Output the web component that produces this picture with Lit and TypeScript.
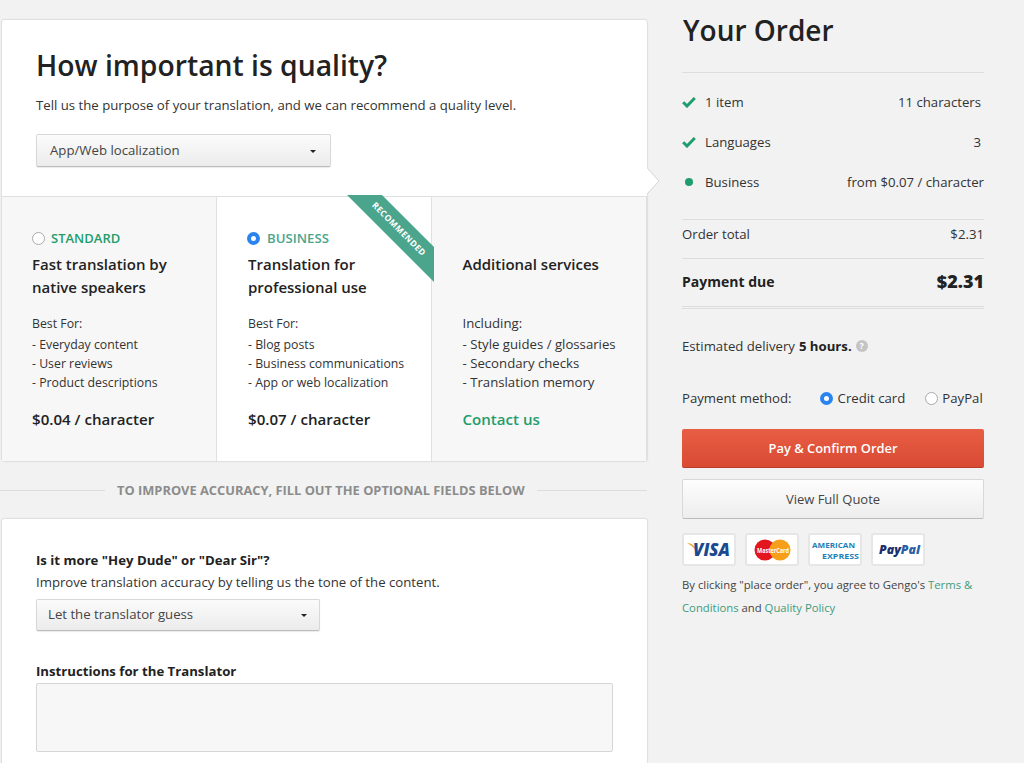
import { LitElement, html, css } from "lit";
import { customElement } from "lit/decorators.js";

const check = () => html`<svg class="ico" width="14" height="12" viewBox="0 0 14 12"><path d="M1.2 6.2 L5 10 L12.8 2" fill="none" stroke="#1f9d6c" stroke-width="3"/></svg>`;

@customElement("app-root")
export class AppRoot extends LitElement {
  static styles = css`
    :host { display: block; width: 1024px; height: 763px; overflow: hidden; background: #f2f2f2; font-family: "Open Sans", sans-serif; color: #333; font-size: 13.2px; }
    * { box-sizing: border-box; }
    .page { display: flex; height: 763px; padding-left: 2px; }
    .left { width: 645px; padding-top: 20px; flex: none; }
    .right { width: 302px; margin-left: 35px; flex: none; }
    .card { background: #fff; box-shadow: 0 0 2px rgba(0,0,0,.28); border-radius: 2px; position: relative; }
    .head { height: 176px; padding: 25px 34px 0; position: relative; }
    .arrow { position: absolute; left: 643px; top: 149px; z-index: 1; }
    h1 { margin: 0; font-size: 28.3px; line-height: 40px; font-weight: 600; color: #222; }
    .sub { margin: 10px 0 0; line-height: 20px; color: #333; }
    .select { display: flex; align-items: center; justify-content: space-between; background: linear-gradient(#fbfbfb,#ececec); border: 1px solid #d8d8d8; border-bottom-color: #bcbcbc; border-radius: 2px; color: #444; font-size: 13.2px; box-shadow: 0 1px 1px rgba(0,0,0,.08); }
    .select i { width: 0; height: 0; border: 3.5px solid transparent; border-top-color: #222; border-bottom: 0; margin-top: 3px; }
    .s1 { width: 295px; height: 33px; margin-top: 19px; padding: 0 14px 2px 13px; }
    .s2 { width: 284px; height: 32px; margin-top: 7px; padding: 0 12px 2px 11px; }
    .plans { display: flex; height: 265px; border-top: 1px solid #e0e0e0; position: relative; }
    .plan { width: 215px; padding: 32px 15px 0 30px; background: #f7f7f7; border-right: 1px solid #e0e0e0; position: relative; }
    .plan.on { background: #fff; padding-left: 31px; }
    .plan.on .tag { margin-left: -1px; gap: 7px; font-size: 13.2px; }
    .plan:last-child { border-right: 0; flex: 1; }
    .tag { display: flex; align-items: center; gap: 6px; height: 18px; font-size: 13px; font-weight: 600; color: #1f9d6c; }
    .on .tag { color: #4aa58c; }
    .radio { width: 13px; height: 13px; border-radius: 50%; border: 1px solid #aaa; background: #fff; flex: none; }
    .radio.sel { border: 4px solid #2a84f0; }
    .pt { font-size: 15px; font-weight: 600; line-height: 23px; color: #222; margin-top: 6px; height: 46px; }
    .lines { margin-top: 15px; font-size: 12.3px; line-height: 19px; color: #333; height: 77px; }
    .lines b { display: block; font-weight: 400; margin-bottom: 2px; }
    .third .lines { font-size: 13.2px; }
    .price { margin-top: 17px; font-size: 15.1px; font-weight: 600; color: #222; line-height: 22px; }
    .price.green { color: #1f9d6c; }
    .plan.third { padding-left: 30.5px; }
    .ribbon { position: absolute; left: 345px; top: -2px; z-index: 1; }
    .rib-t { position: absolute; left: 351px; top: 26px; width: 92px; text-align: center; transform: rotate(45deg); color: #fff; font-size: 8.5px; font-weight: 700; line-height: 12px; letter-spacing: .4px; z-index: 2; white-space: nowrap; }
    .divider { display: flex; align-items: center; height: 58px; width: 647px; margin-left: -2px; gap: 12px; color: #8c8c8c; font-size: 12.85px; font-weight: 700; white-space: nowrap; }
    .divider::before, .divider::after { content: ""; height: 1px; background: #dcdcdc; }
    .divider::before { flex: none; width: 105px; }
    .divider::after { flex: 1; }
    .card2 { height: 300px; padding: 31px 34px; }
    .q { font-weight: 700; line-height: 20px; color: #222; }
    .qs { line-height: 20px; margin-top: 2px; }
    .q2 { margin-top: 30px; }
    .ta { width: 577px; height: 69px; border: 1px solid #d6d6d6; background: #f7f7f7; margin-top: 2px; border-radius: 2px; }
    h2 { margin: 0; height: 73px; padding: 10px 0 0 1px; font-size: 28px; line-height: 40px; font-weight: 600; color: #222; border-bottom: 1px solid #ddd; }
    .row { display: flex; align-items: center; height: 40px; }
    .row .ic { width: 23px; display: flex; }
    .row .v { margin-left: auto; padding-right: 3px; }
    .row .v.f { padding-right: 0; }
    .dot { width: 8px; height: 8px; background: #1f9d6c; border-radius: 50%; margin-left: 3px; }
    .sum { padding-top: 9px; height: 147px; border-bottom: 1px solid #ddd; }
    .line { display: flex; justify-content: space-between; align-items: center; }
    .total { height: 39px; padding-bottom: 11px; border-bottom: 1px solid #ddd; }
    .due { height: 50px; padding-bottom: 3px; border-bottom: 3px double #ddd; font-weight: 700; font-size: 14px; color: #222; }
    .due b { font-size: 18px; }
    .est { margin-top: 27px; height: 20px; display: flex; align-items: center; gap: 4px; }
    .est b { color: #222; }
    .help { width: 12px; height: 12px; border-radius: 50%; background: #c4c4c4; color: #fff; font-size: 9px; font-weight: 700; text-align: center; line-height: 12px; margin-left: 0; }
    .pay { margin-top: 32px; display: flex; align-items: center; height: 20px; white-space: nowrap; }
    .pay .r1 { margin-left: 28px; margin-right: 5px; }
    .pay .r2 { margin-left: 20px; margin-right: 4px; }
    .btn { display: flex; align-items: center; justify-content: center; border-radius: 2px; height: 39px; }
    .red { margin-top: 21px; background: linear-gradient(#e85e45,#d94a33); color: #fff; border-bottom: 1px solid #b93d29; font-weight: 600; font-size: 12.9px; }
    .white { margin-top: 11px; height: 40px; background: linear-gradient(#fdfdfd,#ededed); border: 1px solid #d8d8d8; border-bottom-color: #bbb; color: #444; font-weight: 500; font-size: 13px; }
    .logos { display: flex; gap: 9px; margin-top: 14px; }
    .logo { width: 54px; height: 33px; background: #fff; border: 2px solid #e6e6e6; border-radius: 3px; display: block; }
    .terms { margin-top: 8px; font-size: 11.3px; line-height: 22.5px; color: #444; }
    .terms span { color: #3d9c7c; }
  `;

  render() {
    return html`<div class="page">
      <div class="left">
        <div class="card">
          <svg class="arrow" width="16" height="26" viewBox="0 0 16 26"><polygon points="0,0 3,0 14,12 3,24 0,24" fill="#fff"/><path d="M3 0 L14 12 L3 24" fill="none" stroke="#d4d4d4" stroke-width="1"/></svg>
          <div class="head">
            <h1>How important is quality?</h1>
            <p class="sub">Tell us the purpose of your translation, and we can recommend a quality level.</p>
            <div class="select s1"><span>App/Web localization</span><i></i></div>
          </div>
          <div class="plans">
            <div class="plan">
              <div class="tag"><span class="radio"></span>STANDARD</div>
              <div class="pt">Fast translation by<br />native speakers</div>
              <div class="lines"><b>Best For:</b>- Everyday content<br />- User reviews<br />- Product descriptions</div>
              <div class="price">$0.04 / character</div>
            </div>
            <div class="plan on">
              <div class="tag"><span class="radio sel"></span>BUSINESS</div>
              <div class="pt">Translation for<br />professional use</div>
              <div class="lines"><b>Best For:</b>- Blog posts<br />- Business communications<br />- App or web localization</div>
              <div class="price">$0.07 / character</div>
            </div>
            <div class="plan third">
              <div class="tag"></div>
              <div class="pt">Additional services</div>
              <div class="lines"><b>Including:</b>- Style guides / glossaries<br />- Secondary checks<br />- Translation memory</div>
              <div class="price green">Contact us</div>
            </div>
            <svg class="ribbon" width="90" height="90" viewBox="0 0 90 90"><polygon points="0,0 35,0 87,52 87,87" fill="#4aa58c"/></svg>
            <div class="rib-t">RECOMMENDED</div>
          </div>
        </div>
        <div class="divider">TO IMPROVE ACCURACY, FILL OUT THE OPTIONAL FIELDS BELOW</div>
        <div class="card card2">
          <div class="q">Is it more "Hey Dude" or "Dear Sir"?</div>
          <div class="qs">Improve translation accuracy by telling us the tone of the content.</div>
          <div class="select s2"><span>Let the translator guess</span><i></i></div>
          <div class="q q2">Instructions for the Translator</div>
          <div class="ta"></div>
        </div>
      </div>
      <div class="right">
        <h2>Your Order</h2>
        <div class="sum">
          <div class="row"><span class="ic">${check()}</span>1 item<span class="v">11 characters</span></div>
          <div class="row"><span class="ic">${check()}</span>Languages<span class="v">3</span></div>
          <div class="row"><span class="ic"><span class="dot"></span></span>Business<span class="v f">from $0.07 / character</span></div>
        </div>
        <div class="line total"><span>Order total</span><span>$2.31</span></div>
        <div class="line due"><span>Payment due</span><b>$2.31</b></div>
        <div class="est">Estimated delivery <b>5 hours.</b><span class="help">?</span></div>
        <div class="pay">Payment method:<span class="radio sel r1"></span>Credit card<span class="radio r2"></span>PayPal</div>
        <div class="btn red">Pay &amp; Confirm Order</div>
        <div class="btn white">View Full Quote</div>
        <div class="logos">
          <svg class="logo" viewBox="2 2 50 29"><path d="M5 10 C10 10 13 13 15 19 C12 15 9 12 5 10Z" fill="#f0a830"/><text x="11" y="23" font-family="Open Sans" font-weight="800" font-style="italic" font-size="18" textLength="37" lengthAdjust="spacingAndGlyphs" fill="#1a4a8f">VISA</text></svg>
          <svg class="logo" viewBox="2 2 50 29"><circle cx="20" cy="17" r="10.5" fill="#e3161f"/><circle cx="35" cy="17" r="10.5" fill="#f79e1b"/><text x="12" y="19.5" font-family="Open Sans" font-weight="700" font-size="7" textLength="32" lengthAdjust="spacingAndGlyphs" fill="#fff">MasterCard</text></svg>
          <svg class="logo" viewBox="2 2 50 29"><text x="4" y="15" font-family="Open Sans" font-weight="700" font-size="7.6" textLength="43" lengthAdjust="spacingAndGlyphs" fill="#1c7fb8">AMERICAN</text><text x="14" y="25.5" font-family="Open Sans" font-weight="700" font-size="7.6" textLength="37" lengthAdjust="spacingAndGlyphs" fill="#1c7fb8">EXPRESS</text></svg>
          <svg class="logo" viewBox="2 2 50 29"><text x="8" y="20.5" font-family="Open Sans" font-weight="800" font-style="italic" font-size="12.5" textLength="41" lengthAdjust="spacingAndGlyphs"><tspan fill="#1b2f6b">Pay</tspan><tspan fill="#2a5fa5">Pal</tspan></text></svg>
        </div>
        <div class="terms">By clicking "place order", you agree to Gengo's <span>Terms &amp;</span> <span>Conditions</span> and <span>Quality Policy</span></div>
      </div>
    </div>`;
  }
}
